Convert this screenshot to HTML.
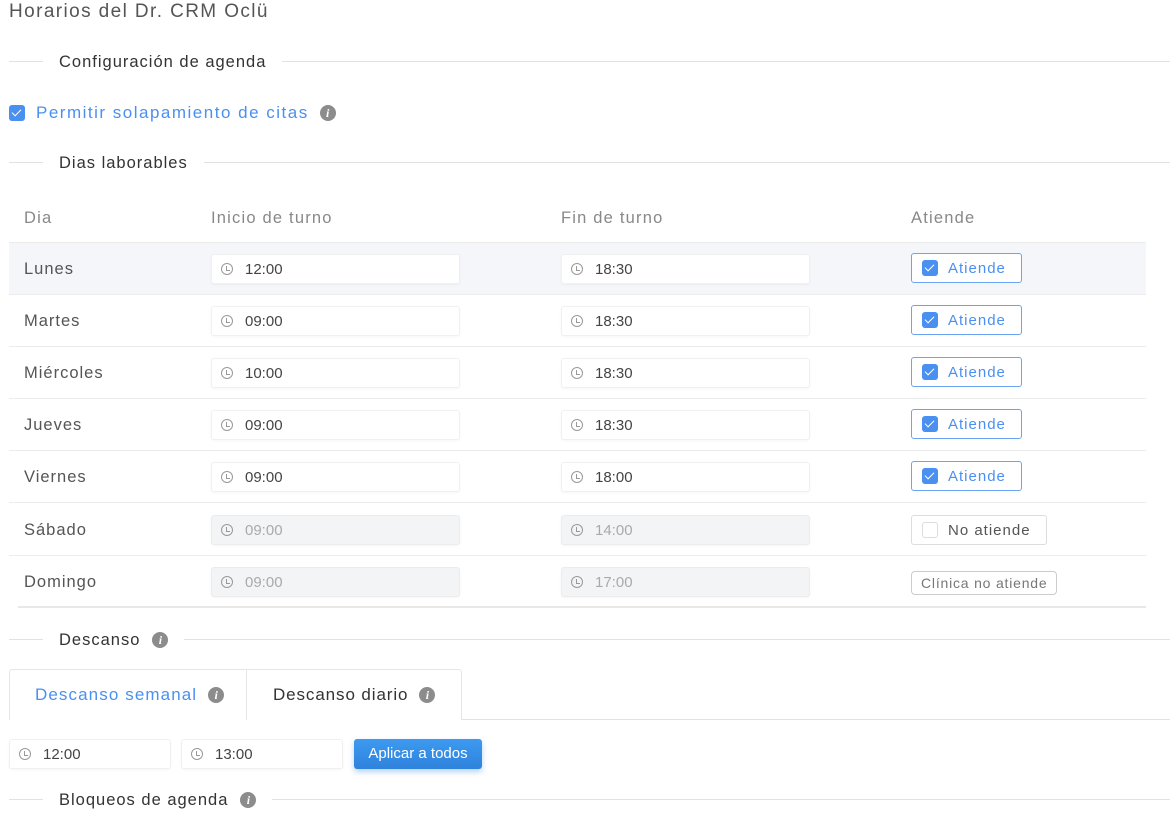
<!DOCTYPE html>
<html><head><meta charset="utf-8"><style>
*{box-sizing:border-box;margin:0;padding:0}
body{width:1170px;height:822px;overflow:hidden;background:#fff;font-family:"Liberation Sans",sans-serif;color:#333;position:relative}
.abs{position:absolute}
.title{left:9px;top:1px;font-size:19px;color:#555;line-height:22px;letter-spacing:1.4px}
.sec{position:absolute;left:9px;right:0;height:1px;background:#e2e2e2}
.sec span{position:absolute;top:-9px;background:#fff;padding:0 16px;font-size:16.5px;color:#333;line-height:20px;display:flex;align-items:center;gap:12px;letter-spacing:1px}
.info{display:inline-block;width:16px;height:16px;border-radius:50%;background:#8c8c8c;color:#fff;font:italic bold 12px/16px "Liberation Serif",serif;text-align:center;letter-spacing:0}
.cb{display:inline-block;width:16px;height:16px;border-radius:3px;background:#4a90f0;position:relative}
.cb:after{content:"";position:absolute;left:5px;top:2px;width:4px;height:8px;border:solid #fff;border-width:0 1.5px 1.5px 0;transform:rotate(45deg)}
.row{position:absolute;left:9px;width:1137px;height:52px;border-bottom:1px solid #ececec}
.row .d{position:absolute;left:15px;top:17px;font-size:16.5px;color:#555;letter-spacing:1px}
.hd{position:absolute;top:209px;font-size:16.5px;color:#888;letter-spacing:1.2px}
.inp{position:absolute;width:249px;height:30px;border:1px solid #f0f0f0;border-radius:3px;background:#fff;font-size:15px;color:#444;line-height:30px;padding-left:33px;box-shadow:0 1px 2px rgba(0,0,0,.04)}
.inp.dis{background:#f3f4f6;color:#aaa;border-color:#ececec}
.clk{position:absolute;left:9px;top:8px;width:12px;height:12px;border:1.2px solid #999;border-radius:50%}
.clk:after{content:"";position:absolute;left:4px;top:1.5px;width:3px;height:4px;border-left:1.2px solid #999;border-bottom:1.2px solid #999}
.btn{position:absolute;left:902px;top:10px;height:30px;border:1px solid #6aa4f5;border-radius:3px;padding:0 15px 0 10px;display:flex;align-items:center;gap:10px;font-size:15px;color:#4a90f0;letter-spacing:1px}
</style></head><body>
<div class="abs title">Horarios del Dr. CRM Oclü</div>
<div class="sec" style="top:61px"><span style="left:34px">Configuración de agenda</span></div>
<div class="abs" style="left:9px;top:103px;display:flex;align-items:center;gap:11px;font-size:17px;color:#4a90f0;letter-spacing:1.5px"><span class="cb"></span>Permitir solapamiento de citas <span class="info" style="margin-left:0">i</span></div>
<div class="sec" style="top:162px"><span style="left:34px">Dias laborables</span></div>
<div class="hd" style="left:24px">Dia</div>
<div class="hd" style="left:211px">Inicio de turno</div>
<div class="hd" style="left:561px">Fin de turno</div>
<div class="hd" style="left:911px">Atiende</div>
<div class="abs" style="left:9px;top:242px;width:1137px;height:1px;background:#ececec"></div>

<div class="row" style="top:243px;background:#f5f6f9"><div class="d">Lunes</div><div class="inp" style="left:202px;top:11px"><i class="clk"></i>12:00</div><div class="inp" style="left:552px;top:11px"><i class="clk"></i>18:30</div><div class="btn" style="background:#fff"><span class="cb"></span>Atiende</div></div>
<div class="row" style="top:295px"><div class="d">Martes</div><div class="inp" style="left:202px;top:11px"><i class="clk"></i>09:00</div><div class="inp" style="left:552px;top:11px"><i class="clk"></i>18:30</div><div class="btn"><span class="cb"></span>Atiende</div></div>
<div class="row" style="top:347px"><div class="d">Miércoles</div><div class="inp" style="left:202px;top:11px"><i class="clk"></i>10:00</div><div class="inp" style="left:552px;top:11px"><i class="clk"></i>18:30</div><div class="btn"><span class="cb"></span>Atiende</div></div>
<div class="row" style="top:399px"><div class="d">Jueves</div><div class="inp" style="left:202px;top:11px"><i class="clk"></i>09:00</div><div class="inp" style="left:552px;top:11px"><i class="clk"></i>18:30</div><div class="btn"><span class="cb"></span>Atiende</div></div>
<div class="row" style="top:451px"><div class="d">Viernes</div><div class="inp" style="left:202px;top:11px"><i class="clk"></i>09:00</div><div class="inp" style="left:552px;top:11px"><i class="clk"></i>18:00</div><div class="btn"><span class="cb"></span>Atiende</div></div>
<div class="row" style="top:504px"><div class="d">Sábado</div><div class="inp dis" style="left:202px;top:11px"><i class="clk"></i>09:00</div><div class="inp dis" style="left:552px;top:11px"><i class="clk"></i>14:00</div><div class="btn" style="border-color:#ddd;color:#555;top:11px"><span class="cb" style="background:#fff;border:1px solid #ddd"></span>No atiende</div></div>
<div class="row" style="top:556px;border-bottom:2px solid #e8e8e8;left:18px;width:1128px"><div class="d" style="left:6px">Domingo</div><div class="inp dis" style="left:193px;top:11px"><i class="clk"></i>09:00</div><div class="inp dis" style="left:543px;top:11px"><i class="clk"></i>17:00</div><div class="btn" style="left:893px;top:15px;height:24px;border-color:#ccc;color:#777;padding:0 9px;font-size:14px;letter-spacing:.8px;border-radius:4px">Clínica no atiende</div></div>

<div class="sec" style="top:639px"><span style="left:34px">Descanso <i class="info">i</i></span></div>
<div class="abs" style="left:9px;top:719px;width:1161px;height:1px;background:#e2e2e2"></div>
<div class="abs" style="left:9px;top:669px;width:453px;height:51px;border:1px solid #e6e6e6;border-bottom:none;border-radius:3px 3px 0 0;background:#fff"></div>
<div class="abs" style="left:246px;top:669px;width:1px;height:51px;background:#e6e6e6"></div>
<div class="abs" style="left:35px;top:685px;font-size:17px;color:#4a90f0;letter-spacing:1.1px;display:flex;align-items:center;gap:11px">Descanso semanal <i class="info">i</i></div>
<div class="abs" style="left:273px;top:685px;font-size:17px;color:#333;letter-spacing:.9px;display:flex;align-items:center;gap:11px">Descanso diario <i class="info">i</i></div>
<div class="inp" style="left:9px;top:739px;width:162px"><i class="clk"></i>12:00</div>
<div class="inp" style="left:181px;top:739px;width:162px"><i class="clk"></i>13:00</div>
<div class="abs" style="left:354px;top:739px;width:128px;height:30px;background:linear-gradient(#3d9af0,#2f82dc);border-radius:3px;color:#fff;font-size:15px;line-height:29px;text-align:center;box-shadow:0 3px 6px rgba(50,130,220,.35)">Aplicar a todos</div>
<div class="sec" style="top:799px"><span style="left:34px">Bloqueos de agenda <i class="info">i</i></span></div>
</body></html>
